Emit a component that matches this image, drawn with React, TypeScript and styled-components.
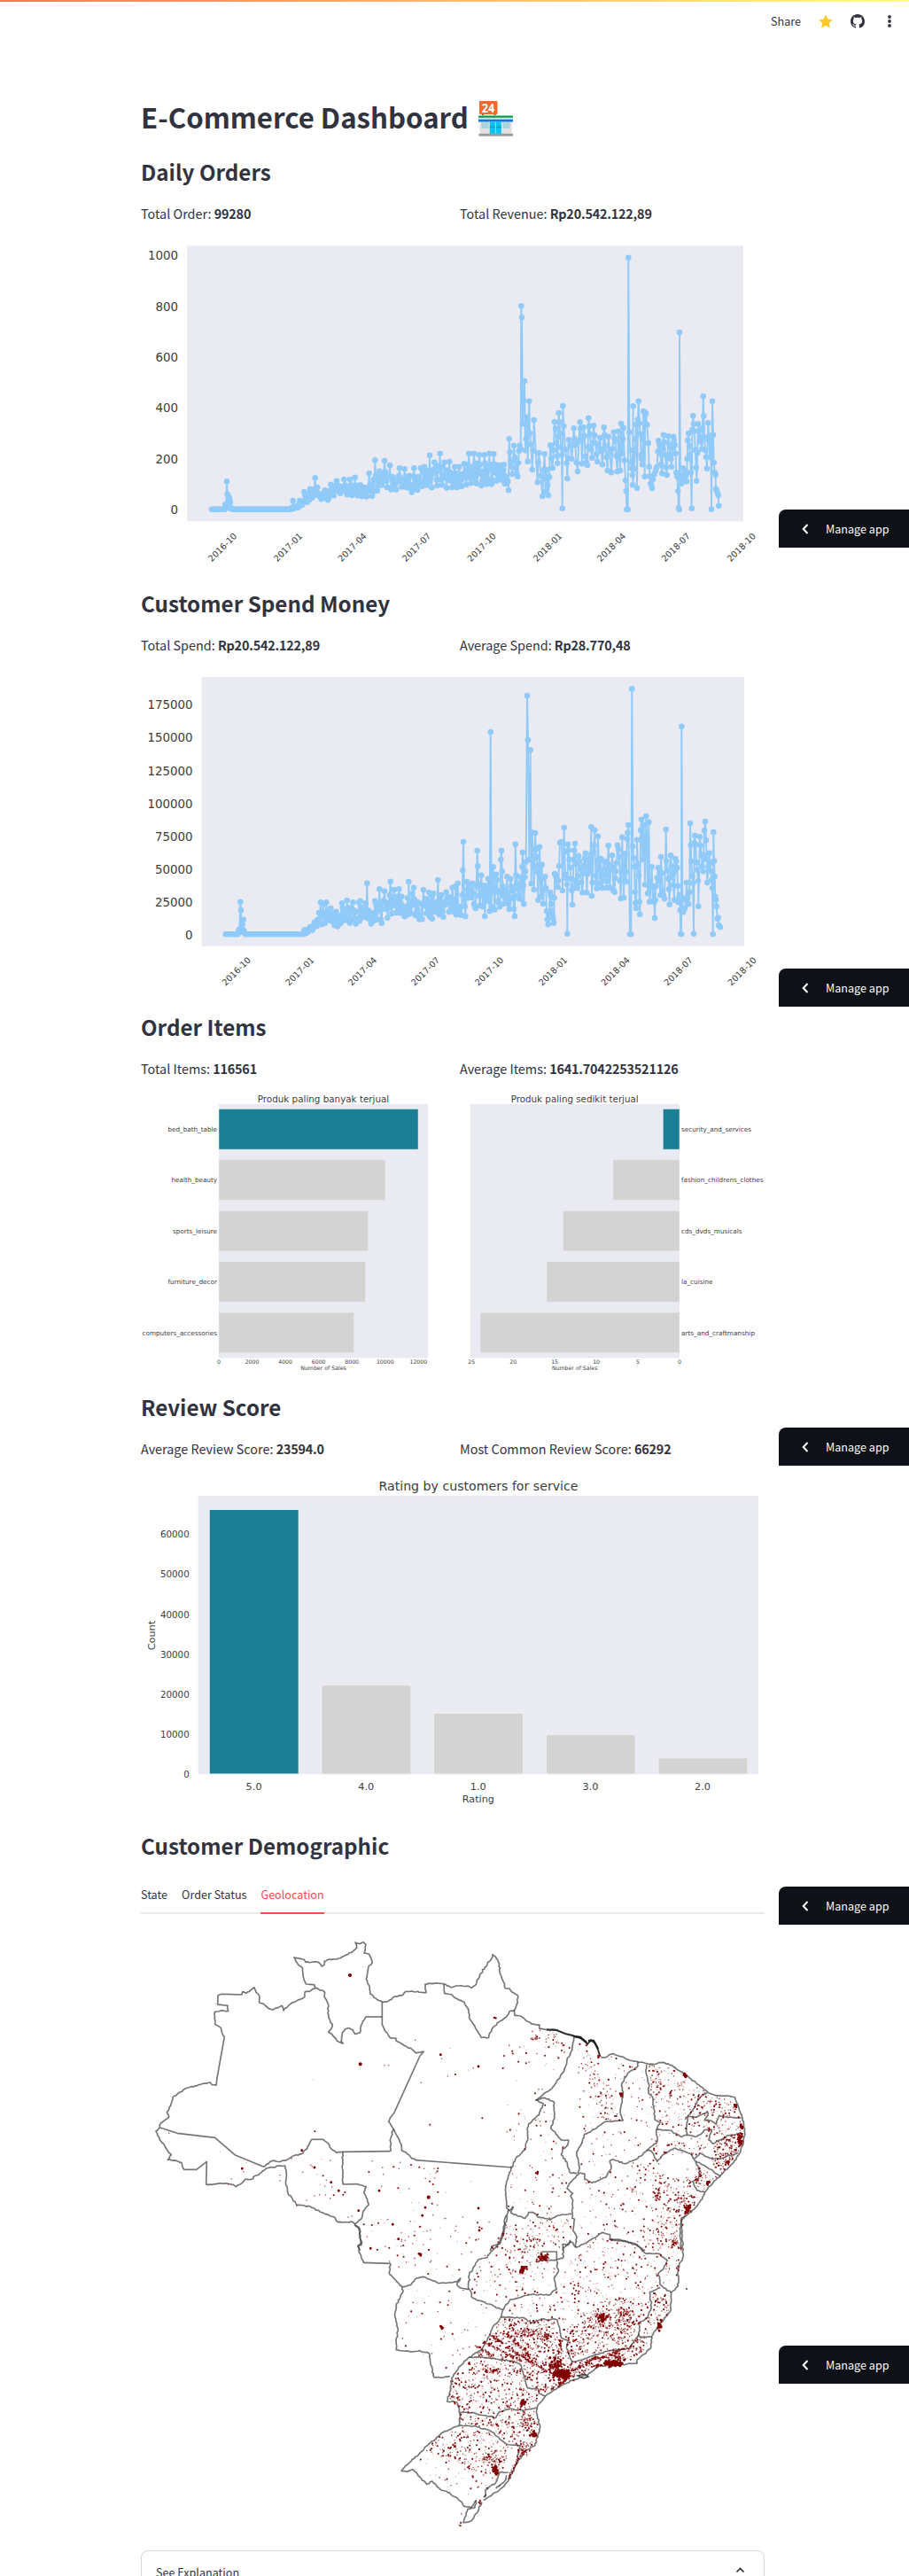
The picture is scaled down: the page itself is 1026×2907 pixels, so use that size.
import React from "react";
import styled, { createGlobalStyle } from "styled-components";

const GlobalStyle = createGlobalStyle`
  * { box-sizing: border-box; }
  body { margin: 0; background: #fff; }
`;

const SANS = `"Noto Sans CJK SC", "Source Sans Pro", sans-serif`;
const INK = "#31333f";
const PLOT = "#eaeaf2";
const LINE = "#90caf9";
const TEAL = "#1b8096";
const GREY = "#d3d3d3";

const Page = styled.div`
  position: relative;
  width: 1026px;
  height: 2907px;
  overflow: hidden;
  background: #fff;
  color: ${INK};
  font-family: ${SANS};
  font-size: 14.4px;
`;
const Decoration = styled.div`
  height: 2px;
  background: linear-gradient(90deg, #ff7459, #fffd80);
`;
const Toolbar = styled.header`
  display: flex;
  justify-content: flex-end;
  align-items: center;
  height: 44px;
  padding-right: 14px;
  gap: 20px;
`;
const Share = styled.span`
  font-size: 12.6px;
  line-height: 20px;
`;
const Main = styled.main`
  width: 704px;
  margin-left: 159px;
  padding-top: 64px;
`;
const Title = styled.h1`
  display: flex;
  align-items: center;
  gap: 11px;
  margin: 0 0 23px;
  height: 44px;
  line-height: 44px;
  font-size: 31.2px;
  font-weight: 700;
`;
const Section = styled.section<{ $height: number }>`
  display: flex;
  flex-direction: column;
  height: ${(p) => p.$height}px;
`;
const Heading = styled.h2`
  margin: 0 0 18px;
  font-size: 24.2px;
  line-height: 34px;
  font-weight: 700;
`;
const Metrics = styled.div`
  display: grid;
  grid-template-columns: 344px 344px;
  column-gap: 16px;
  line-height: 24px;
  margin-bottom: 16px;
`;
const Metric = styled.p`
  margin: 0;
  white-space: nowrap;

  strong {
    letter-spacing: -0.2px;
  }
`;
const Figure = styled.svg`
  display: block;
  flex: none;
  overflow: visible;
  font-family: "DejaVu Sans", sans-serif;
  fill: #3c3c3c;
`;
const Tabs = styled.div`
  display: flex;
  gap: 16px;
  height: 42px;
  border-bottom: 2px solid #e9eaeb;
  margin-bottom: 16px;
`;
const Tab = styled.button<{ $active?: boolean }>`
  border: 0;
  border-bottom: 2px solid ${(p) => (p.$active ? "#ff4b4b" : "transparent")};
  margin-bottom: -2px;
  padding: 0;
  background: none;
  font-family: inherit;
  font-size: 12.6px;
  line-height: 40px;
  color: ${(p) => (p.$active ? "#ff4b4b" : INK)};
`;
const Expander = styled.div`
  display: flex;
  justify-content: space-between;
  height: 60px;
  padding: 12px 17px 0 16px;
  border: 1px solid #d6d6d9;
  border-radius: 8px;
  font-size: 12.6px;
  line-height: 24px;
`;
const ManageButton = styled.button<{ $top: number }>`
  position: absolute;
  right: 0;
  top: ${(p) => p.$top}px;
  display: flex;
  align-items: center;
  width: 147px;
  height: 43px;
  padding: 0 0 0 26px;
  gap: 19px;
  border: 0;
  border-radius: 8px 0 0 0;
  background: #0e1117;
  color: #fafafa;
  font-family: inherit;
  font-size: 12.6px;
`;

type Pt = [number, number];

function makeRandom(seed: number) {
  let s = seed;
  return () => {
    s = (s * 1664525 + 1013904223) % 4294967296;
    return s / 4294967296;
  };
}

function pairs(text: string): Pt[] {
  return text.trim().split(/\s+/).map((t) => t.split(",").map(Number) as Pt);
}

/* Daily series: "x,high,low" entries describe the growth period, "x,y" entries single days. */
const ORDERS_GROWTH = `565,915,935 580,885,925 600,875,915 617,838,890 625,870,905 650,880,915 670,860,910 690,848,885 715,843,895 735,843,895 752,836,900 770,862,895 782,870,908 800,822,895 820,778,903 835,815,860 852,780,865 870,795,875 880,835,880 903,805,875 920,808,860 937,830,885 952,805,888 975,805,870 987,800,860 1005,761,865 1021,785,878 1040,755,850 1055,785,873 1072,783,870 1090,800,870 1105,800,870 1122,790,862 1138,755,860 1155,755,850 1173,760,865 1190,760,862 1207,755,855 1222,757,862 1240,795,835 1257,793,858`;
const ORDERS_LATE = `1270,850 1272,880 1274,706 1279,780 1285,825 1290,728 1297,805 1303,833 1305,787 1310,728 1313,740 1315,256 1317,295 1320,655 1326,510 1329,745 1334,632 1337,782 1342,578 1344,687 1352,810 1358,642 1370,853 1375,753 1387,900 1394,757 1397,885 1401,810 1407,897 1413,727 1421,805 1428,648 1434,720 1438,788 1442,618 1447,687 1452,760 1454,941 1456,594 1459,663 1469,788 1471,840 1476,709 1486,773 1493,670 1498,727 1506,816 1514,649 1518,700 1521,790 1526,667 1532,765 1539,795 1543,635 1548,690 1555,770 1560,661 1567,720 1573,783 1582,702 1590,793 1595,667 1600,730 1607,813 1610,698 1620,820 1628,683 1633,715 1640,817 1644,680 1650,813 1653,654 1657,755 1661,668 1668,846 1672,945 1676,945 1678,92 1681,683 1686,785 1691,828 1694,595 1693,862 1700,745 1704,657 1707,872 1710,640 1712,578 1715,653 1721,760 1725,793 1729,612 1733,833 1735,625 1737,618 1745,720 1748,800 1753,857 1758,873 1761,843 1770,815 1775,800 1780,712 1786,755 1792,823 1797,692 1803,760 1808,828 1813,697 1820,760 1824,800 1830,698 1835,727 1840,820 1843,833 1848,940 1850,945 1851,345 1854,840 1857,857 1863,805 1867,850 1871,815 1875,850 1877,773 1879,710 1882,687 1887,760 1892,941 1894,675 1897,628 1901,680 1904,743 1907,803 1909,848 1914,655 1920,700 1927,740 1931,562 1935,700 1941,767 1944,806 1948,652 1954,768 1957,695 1959,944 1962,578 1965,692 1967,787 1970,820 1973,827 1974,875 1978,885 1982,897 1984,932`;
const SPEND_GROWTH = `588,1198,1205 600,1188,1206 615,1172,1192 630,1140,1180 636,1105,1178 645,1110,1180 655,1105,1170 670,1125,1160 680,1150,1180 688,1136,1188 700,1150,1185 708,1108,1160 725,1098,1175 745,1105,1175 765,1105,1180 770,1100,1155 788,1108,1155 793,1040,1150 800,1140,1174 816,1140,1182 820,1100,1150 835,1060,1175 852,1067,1175 872,1034,1140 884,1062,1148 901,1060,1130 910,1085,1153 930,1090,1152 934,1035,1140 951,1055,1145 965,1105,1155 977,1110,1173 984,1063,1140 1003,1072,1145 1011,1080,1170 1018,1075,1140 1033,1029,1135 1044,1080,1163 1061,1070,1143 1082,1055,1130 1093,1050,1148 1100,1040,1145`;
const SPEND_LATE = `1112,1148 1115,1080 1119,900 1122,1100 1126,1153 1131,1035 1136,1090 1141,1045 1146,1088 1150,1040 1155,1110 1160,1125 1163,1050 1166,930 1170,1042 1175,1115 1180,1013 1185,1120 1189,1048 1192,1152 1196,1050 1200,1100 1203,1025 1208,1135 1211,528 1214,1120 1217,1010 1220,985 1225,1130 1230,1010 1233,1028 1237,1100 1242,1120 1246,960 1248,930 1252,1050 1256,1110 1260,1062 1264,1100 1267,1018 1273,1110 1275,1128 1279,1025 1285,1065 1290,1127 1293,1152 1295,908 1298,1013 1303,1060 1307,1092 1312,1020 1316,1095 1320,936 1324,1111 1327,1020 1331,968 1335,405 1338,555 1342,960 1346,589 1349,1042 1352,868 1358,1062 1362,870 1367,950 1372,1097 1377,917 1381,1085 1385,977 1389,1110 1396,1018 1401,1135 1406,1180 1413,1072 1417,1110 1421,1145 1425,1175 1427,1090 1428,1008 1434,1020 1439,1053 1443,982 1446,903 1452,900 1455,1065 1460,852 1464,1010 1470,1045 1471,1211 1473,908 1478,960 1483,1025 1488,1113 1492,960 1497,906 1501,1030 1505,1057 1509,947 1515,990 1522,1072 1527,980 1533,938 1537,1072 1542,960 1547,1000 1552,850 1554,1083 1559,935 1564,860 1567,1015 1571,1058 1575,881 1580,1042 1584,957 1590,1057 1596,965 1601,1015 1605,1055 1610,913 1615,1055 1623,946 1627,1065 1631,1070 1635,1000 1641,911 1647,950 1652,1092 1657,884 1662,1090 1666,940 1670,1035 1673,890 1678,843 1683,1213 1687,1213 1690,382 1693,915 1698,985 1702,1107 1704,1125 1707,893 1713,1015 1717,1145 1719,860 1722,824 1726,960 1730,842 1734,1045 1738,813 1741,888 1743,1075 1747,833 1750,1103 1757,985 1760,1100 1763,1050 1767,1158 1771,1050 1779,988 1786,1080 1788,951 1794,1065 1800,1093 1805,858 1807,965 1813,1025 1817,1112 1821,946 1827,1010 1833,1097 1837,957 1843,988 1847,1105 1851,1080 1855,1211 1857,1213 1858,509 1861,1090 1863,1138 1869,1125 1875,1038 1882,1111 1885,1070 1887,837 1891,965 1896,1040 1899,1211 1901,903 1903,879 1908,970 1914,1032 1915,1118 1920,883 1925,945 1931,1000 1935,862 1938,831 1941,895 1945,1038 1952,938 1957,1000 1962,1057 1964,1213 1966,867 1970,1017 1972,1085 1976,1118 1979,1160 1982,1157 1984,1183 1989,1189`;

function buildSeries(start: Pt[], growth: string, late: string, seed: number): Pt[] {
  const rnd = makeRandom(seed);
  const out: Pt[] = [...start];
  const g = growth.split(" ").map((t) => t.split(",").map(Number));
  g.forEach(([x, hi, lo], i) => {
    const next = g[i + 1];
    out.push([x, hi]);
    const end = next ? next[0] : x + 8;
    const n = Math.max(1, Math.round((end - x) / 2.4));
    for (let k = 1; k < n; k++) {
      const t = k / n;
      const h = next ? hi + (next[1] - hi) * t : hi;
      const l = next ? lo + (next[2] - lo) * t : lo;
      const f = k === Math.floor(n / 2) ? 1 : 0.28 + rnd() * 0.62;
      out.push([x + (end - x) * t, h + (l - h) * f]);
    }
  });
  const l = pairs(late);
  l.forEach((p, i) => {
    out.push(p);
    const q = l[i + 1];
    if (q && q[0] - p[0] > 3 && Math.abs(q[1] - p[1]) < 200) {
      const f = 0.3 + rnd() * 0.4;
      out.push([(p[0] + q[0]) / 2, p[1] + (q[1] - p[1]) * f]);
    }
  });
  return out;
}

const flat = (from: number, to: number, y: number): Pt[] => {
  const r: Pt[] = [];
  for (let x = from; x <= to; x += 2.4) r.push([x, y]);
  return r;
};

const ORDERS = buildSeries(
  [...flat(267, 311, 944.5), ...pairs("313,928 316,930 318,850 320,893 323,940 325,903 327,910 330,921 333,940"), ...flat(336, 537, 944.5), ...pairs("539,938 542,915 545,942 550,940 555,932 560,938 563,930")],
  ORDERS_GROWTH, ORDERS_LATE, 7,
);
const SPEND = buildSeries(
  [...flat(314, 355, 1213), ...pairs("358,1200 361,1196 364,1103 366,1132 368,1205 371,1180 374,1163 376,1200 379,1210"), ...flat(382, 577, 1213), ...pairs("580,1200 583,1198 586,1210")],
  SPEND_GROWTH, SPEND_LATE, 11,
);

interface LabelProps {
  x: number;
  y: number;
  size: number;
  anchor?: "start" | "middle" | "end";
  width?: number;
  rotate?: number;
  children: React.ReactNode;
}
function Label({ x, y, size, anchor = "middle", width, rotate, children }: LabelProps) {
  return (
    <text
      x={x}
      y={y}
      fontSize={size}
      textAnchor={anchor}
      textLength={width}
      lengthAdjust={width ? "spacingAndGlyphs" : undefined}
      transform={rotate ? `rotate(${rotate} ${x} ${y})` : undefined}
    >
      {children}
    </text>
  );
}

interface SeriesProps {
  top: number;
  height: number;
  originY: number;
  plot: [number, number, number, number];
  data: Pt[];
  ticks: [string, number][];
  tickX: number;
  dates: number[];
  dateY: number;
}
const DATES = ["2016-10", "2017-01", "2017-04", "2017-07", "2017-10", "2018-01", "2018-04", "2018-07", "2018-10"];
function SeriesChart({ top, height, originY, plot, data, ticks, tickX, dates, dateY }: SeriesProps) {
  const pts = data.map(([x, y]) => [150 + x / 3, originY + y / 3]);
  return (
    <Figure width={704} height={height} viewBox={`159 ${top} 704 ${height}`}>
      <rect x={plot[0]} y={plot[1]} width={plot[2]} height={plot[3]} fill={PLOT} />
      <polyline points={pts.map((p) => p.map((v) => v.toFixed(1)).join(",")).join(" ")} fill="none" stroke={LINE} strokeWidth={1.9} strokeLinejoin="round" />
      <path d={pts.map((p) => `M${p[0].toFixed(1)} ${p[1].toFixed(1)}h0`).join("")} stroke={LINE} strokeWidth={6.6} strokeLinecap="round" />
      {ticks.map(([t, y]) => <Label key={t} x={tickX} y={y + 4.9} size={13.4} anchor="end">{t}</Label>)}
      {DATES.map((d, i) => (
        <g key={d} transform={`translate(${dates[i]} ${dateY}) rotate(-45)`}>
          <Label x={0} y={3.5} size={9.8}>{d}</Label>
        </g>
      ))}
    </Figure>
  );
}

const BEST: [string, number, number][] = [["bed_bath_table", 472, 55.5], ["health_beauty", 435, 51.5], ["sports_leisure", 415.7, 50], ["furniture_decor", 412.7, 55.5], ["computers_accessories", 399.7, 84.5]];
const WORST: [string, number, number][] = [["security_and_services", 748.3, 79], ["fashion_childrens_clothes", 692, 92.5], ["cds_dvds_musicals", 635.5, 68.5], ["la_cuisine", 617, 35.5], ["arts_and_craftmanship", 542, 83]];

function ItemsChart() {
  return (
    <Figure width={704} height={321} viewBox="159 1234 704 321">
      <rect x={247} y={1246} width={236} height={286.5} fill={PLOT} />
      <rect x={530.6} y={1246} width={236.4} height={286.5} fill={PLOT} />
      <Label x={365} y={1244.3} size={10.4} width={148.5}>Produk paling banyak terjual</Label>
      <Label x={648.7} y={1244.3} size={10.4} width={144}>Produk paling sedikit terjual</Label>
      {BEST.map(([n, x, w], i) => (
        <g key={n}>
          <rect x={247} y={1251.5 + i * 57.4} width={x - 247} height={45.6} fill={i ? GREY : TEAL} stroke="#eceef3" strokeWidth={0.5} />
          <Label x={245} y={1277 + i * 57.4} size={7.3} anchor="end" width={w}>{n}</Label>
        </g>
      ))}
      {WORST.map(([n, x, w], i) => (
        <g key={n}>
          <rect x={x} y={1251.5 + i * 57.4} width={767 - x} height={45.6} fill={i ? GREY : TEAL} stroke="#eceef3" strokeWidth={0.5} />
          <Label x={769} y={1277 + i * 57.4} size={7.3} anchor="start" width={w}>{n}</Label>
        </g>
      ))}
      {[0, 2000, 4000, 6000, 8000, 10000, 12000].map((t, i) => <Label key={t} x={247 + i * 37.55} y={1539.2} size={6.2}>{t}</Label>)}
      {[25, 20, 15, 10, 5, 0].map((t, i) => <Label key={t} x={532.2 + i * 46.96} y={1539.2} size={6.2}>{t}</Label>)}
      <Label x={365} y={1546} size={6.3} width={51.5}>Number of Sales</Label>
      <Label x={648.7} y={1546} size={6.3} width={51.5}>Number of Sales</Label>
    </Figure>
  );
}

const RATINGS: [string, number][] = [["5.0", 1703.4], ["4.0", 1901.6], ["1.0", 1933.2], ["3.0", 1957.6], ["2.0", 1983.8]];
function RatingChart() {
  return (
    <Figure width={704} height={386} viewBox="159 1663 704 386">
      <rect x={223.7} y={1688.2} width={632.4} height={314} fill={PLOT} />
      <Label x={540} y={1682} size={13.2} width={225}>Rating by customers for service</Label>
      {RATINGS.map(([n, y], i) => (
        <g key={n}>
          <rect x={236.2 + i * 126.7} y={y} width={101} height={2002 - y} fill={i ? GREY : TEAL} stroke="#f1f1f6" strokeWidth={1} />
          <Label x={286.6 + i * 126.6} y={2020} size={11.3}>{n}</Label>
        </g>
      ))}
      {[0, 1, 2, 3, 4, 5, 6].map((k) => <Label key={k} x={213.7} y={2006.2 - k * 45.15} size={10.3} anchor="end">{k * 10000}</Label>)}
      <Label x={539.8} y={2034.3} size={11} width={36}>Rating</Label>
      <Label x={175} y={1845.6} size={11} width={33.5} rotate={-90}>Count</Label>
    </Figure>
  );
}

/* State and coast lines, one group for each map sheet. */
const SHEETS = [
  { tx: 150, ty: 2170, sx: 1 / 3, sy: 1 / 3, lines: [
    "90,690 95,678 108,668 122,658 115,640 128,618 135,590 160,573 185,558 215,552 240,543 262,540 268,548 282,550",
    "310,385 302,372 298,355 278,343 277,302 300,296 323,298 321,280 287,277",
    "369,243 371,233 383,238 398,228 411,218 417,235 427,245 428,270 440,273 455,285 472,294 490,288 505,280 510,297 520,287 535,273 565,259 582,250 583,233 603,229 617,221 640,228 650,235 648,250 657,265 662,285 660,305 667,328 676,350 662,370 675,378 692,400 712,408 705,400 709,372 720,359 733,356 745,363 752,376 768,372 774,345 788,318",
    "617,221 615,210 586,207 576,180 574,152 560,142 545,117 580,124 585,133 625,132 640,147 648,142 648,130 660,124 690,123 715,112 740,100 758,85 753,66 770,70 780,65 789,73 783,102 800,106 811,132 797,152 790,190 802,220 803,240 822,255 844,268",
    "844,345 853,365 870,388 890,390 892,400 920,416 945,428 957,440 985,436 972,450",
    "844,268 865,265 880,253 915,243 925,232 945,231 993,236 990,218 990,207 1020,204 1052,205",
    "886,640 866,672 882,697 873,730 872,773",
    "882,697 895,722 908,748 910,770 935,785 945,798 957,803",
    "443,826 470,806 500,808 520,803 540,790 575,780 590,765 605,733",
    "645,733 660,745 672,765 690,778 711,775",
    "90,692 78,705 90,730 110,760 130,785 118,802 150,806 165,812 172,835",
    "248,886 270,886 300,882 340,886 350,893 370,880 380,868 400,868 430,848 450,832 500,822 515,822 520,850 517,880 525,915 555,955 600,960 650,985 680,995 695,1013 745,1013 752,1020",
    "711,775 709,830 711,885", "762,884 790,893 782,910 790,930 798,955 780,975 775,1000 752,1020 765,1030 767,1055 775,1085 762,1093 770,1109",
  ], straight: ["282,550 285,525 310,385", "287,277 288,245 300,241 369,243", "788,318 844,318", "844,268 844,345", "972,450 886,640", "872,773 711,775", "957,803 1285,828", "90,692 150,712 278,727 345,785 443,826", "605,733 645,733", "172,835 215,835 250,808 248,886", "711,885 762,884"] },
  { tx: 500, ty: 2170, sx: 1 / 3, sy: 1 / 3, lines: [
    "2,207 30,218 50,213 80,214 97,220 112,208 125,175 150,140 165,120 168,107 185,125 191,140 192,165 205,200 212,222 225,222 235,235 253,245 253,270 243,293 243,313 262,315 285,333 300,342 327,345 327,358 350,361 390,362",
    "2,207 5,238 28,242 50,258 72,268 87,297 90,325 105,345 122,375 130,388 155,388 165,360 190,335 215,318 225,300 243,295",
    "535,455 552,455 572,443 600,452 625,462 650,468 685,475 710,478 745,472 775,482 800,500 830,520 860,545 895,572 920,583 970,586 988,590 1000,620 1012,655 1018,680 1022,710 1018,745 1002,785 975,820 940,855 915,878 890,908 870,945 850,970 825,990 808,998 803,1040 806,1109",
    "444,388 438,430 420,465 410,500 370,560 314,600 340,612 325,650 290,680 285,700 288,730 275,770 245,800 225,845 212,890 215,965 225,975 238,960",
    "314,600 345,592 375,605 378,660 365,695 400,735 425,735 422,752 405,765 400,785 420,810 430,845 455,847",
    "660,470 660,485 625,510 605,545 610,580 600,640 610,668 550,673 515,698 480,715 468,750 452,775 462,825 458,848",
    "463,845 480,850 480,868 505,880 550,862 570,830 565,805 575,800 615,815 660,797 690,770 725,742 723,700 735,675 718,667 710,590 695,575 697,545 688,510 690,480",
    "723,700 770,702 808,725 825,718 825,680 828,655 845,635 860,605 880,580 895,575",
    "828,655 860,657 895,638 897,652 885,668 910,670 925,682 935,652 965,658 1010,660",
    "825,718 860,723 890,700 910,700 900,735 915,748 960,722 1010,710",
    "690,770 705,772 725,808 745,785 785,762 835,780 850,800 870,780 915,800 950,795 1000,778",
    "850,803 890,825 940,857", "855,808 870,840 865,865 845,875 860,905 887,912",
    "463,847 430,880 420,900 440,915 432,925 440,940 437,1000 446,1003 440,1040 452,1060 450,1098 490,1080 540,1048 565,1055 565,1070 580,1075 620,1078 660,1095 685,1109",
    "238,960 230,982 278,1000 290,980 305,980 320,995 340,998 365,1005 390,990 435,985",
    "225,970 210,1000 205,1040 190,1085 165,1095 160,1109", "450,1098 430,1075 425,1090 405,1088 405,1109",
  ], straight: [] as string[] },
  { tx: 400, ty: 2500, sx: 0.3992, sy: 1 / 3, lines: [
    "0,32 15,45 20,100 10,105 25,160", "102,163 98,195 120,225 135,242 160,235 175,213 195,208 240,230 265,228 290,225 300,213 290,235 298,245 325,250 335,280 380,300 420,320 412,350",
    "135,242 137,260 118,305 115,345 122,380 118,455 160,462 185,458 212,468 215,500 225,548 245,550 270,545",
    "412,350 390,380 375,425 360,455 325,480 295,515 275,550 272,590 262,630 290,633 298,670 297,712",
    "432,0 425,40 415,85 412,95 385,125 375,143 350,150 325,200 323,250",
    "325,480 380,482 450,495 470,505 480,545 490,585 520,588 522,603 540,612",
    "420,320 440,285 500,268 550,270 572,250 565,210 577,190 572,155",
    "572,150 590,145 590,110 612,88", "720,82 750,82 800,100 825,130 860,130 885,152 875,180 860,195 865,235 895,262",
    "935,0 925,20 930,140 915,180 915,240 895,262 895,320 860,375 840,410 838,450 800,488 800,500 740,508 690,510 660,540 610,560 560,595 540,612 520,640 515,670 525,720 510,780 480,800 455,850 435,900 410,930 365,965",
    "865,245 835,260 840,310 830,345 805,365 805,410 840,412", "805,400 785,435 780,450 720,458 640,490 615,495 600,450 605,425 585,415 580,380 575,355 565,350 545,355 530,350 500,365 480,347 415,345",
    "298,668 330,668 400,685 410,665 440,655 480,660 515,650", "297,712 345,715 385,730 430,775 468,780 460,820",
    "297,712 250,735 210,775 185,805 140,855 133,865 150,868 165,860 205,910 220,900 245,930 270,940 300,968 310,985 330,988 345,965",
    "435,870 410,870 400,905 370,930 370,955", "345,965 340,990 320,995 308,1040 330,1035 350,1000 360,970", "430,880 425,900 400,925",
  ], straight: ["25,160 102,163", "530,123 572,123 572,152 530,152 530,123"] },
];

const rough = makeRandom(31);
function roughen(points: Pt[]): string {
  const out: Pt[] = [];
  points.forEach((p, i) => {
    out.push(p);
    const q = points[i + 1];
    if (!q) return;
    const d = Math.hypot(q[0] - p[0], q[1] - p[1]);
    const n = Math.floor(d / 6);
    for (let k = 1; k < n; k++) {
      out.push([p[0] + ((q[0] - p[0]) * k) / n + (rough() - 0.5) * 4, p[1] + ((q[1] - p[1]) * k) / n + (rough() - 0.5) * 4]);
    }
  });
  return out.map((p) => p.map((v) => v.toFixed(1)).join(",")).join(" ");
}
const OUTLINES = SHEETS.map((s) => ({ ...s, drawn: s.lines.map((l) => roughen(pairs(l))) }));

/* Customer locations. Towns are "x,y,radius"; clouds are polygons or gaussians filled with small dots. */
const north = (t: string) => t.split(" ").map((s) => { const [x, y, r] = s.split(",").map(Number); return [150 + x / 3, 2170 + y / 3, r]; });
const TOWNS = north("735,177,1.9 770,478,2.4 370,832,1.5 572,770,1.7 780,148,.6 280,275,.6 610,531,.6 852,482,.7 866,482,.7 956,397,.8 1042,446,1.4 1046,460,.7 1075,424,.6 1170,486,1.3 1153,491,.9 1092,513,1.1 1066,519,.8 1136,498,.6 976,541,.9 1183,661,1.2 1006,683,1 616,706,1 122,712,.8 296,774,.6 384,812,.6 375,842,.7 334,867,.8 323,885,.7 498,854,.8 498,873,.8 538,797,.8 639,800,.6 668,804,.9 602,820,.9 607,825,.9 615,828,1.3 575,844,.8 623,851,.6 644,856,1.1 655,871,.9 671,878,1.6 634,886,.6 650,891,.9 674,894,.8 697,907,1.3 718,912,1.1 712,920,1.1 680,922,1.2 668,932,.9 632,920,.8 615,924,.8 588,939,.8 554,958,.8 652,921,.7 764,974,1.3 742,993,.9 729,996,.7 811,806,.9 799,843,1.1 845,828,.9 848,851,.9 883,826,1.1 901,832,.9 905,811,.7 942,819,1 970,827,1.2 986,832,.8 1020,832,.7 1033,831,1.1 1031,841,1.2 1027,846,.9 1007,850,.6 991,865,.9 1005,875,1.2 1022,864,.9 1016,885,1.1 842,892,.9 834,907,1.4 898,898,1.1 904,912,.6 935,900,.8 1033,911,1 1060,912,.6 1001,929,1.8 943,947,.6 968,947,.6 1013,950,1 1031,955,.7 990,964,1.4 950,973,.6 980,991,1.3 1016,989,.7 1117,996,.8 1170,966,1.3 782,1021,1.2 809,1023,1.1 831,1016,1.2 880,1021,1.3 940,1010,.8 973,1028,1 1167,1015,1.2 1173,1041,1.3 1162,1073,1.2 953,1058,1 934,1062,.9 899,1070,1.3 922,1075,.9 910,1078,.8 960,1076,.6 793,1063,.8 855,1095,.9 868,1100,1.1 916,1092,1 805,1102,1.3 828,1106,1.2 1076,1061,.9 1099,1079,.6 1129,1084,1 1139,1066,.9 1144,875,.6");

type Cloud = { sheet: number; poly: string; n: number; big: number };
const CLOUDS: Cloud[] = [
  { sheet: 1, poly: "200,400 420,390 400,500 310,600 290,680 220,790 200,540", n: 46, big: 0.4 },
  { sheet: 1, poly: "290,350 430,385 430,430 330,420 290,400", n: 26, big: 0.3 },
  { sheet: 1, poly: "330,610 370,620 370,700 420,760 400,790 430,845 420,900 430,980 360,1000 290,980 220,960 220,860 290,740", n: 70, big: 0.35 },
  { sheet: 1, poly: "450,400 490,410 600,670 540,670 480,520", n: 85, big: 0.3 },
  { sheet: 1, poly: "520,420 655,475 605,540 600,660 470,710 440,500", n: 60, big: 0.4 },
  { sheet: 1, poly: "610,500 690,480 705,590 720,740 580,800 460,840 470,740 600,680", n: 62, big: 0.3 },
  { sheet: 1, poly: "695,480 780,485 890,575 830,640 820,715 735,695 710,580", n: 150, big: 0.3 },
  { sheet: 1, poly: "695,500 740,490 730,590 705,580", n: 45, big: 0.2 },
  { sheet: 1, poly: "880,580 985,592 1015,700 960,720 835,710 830,650", n: 170, big: 0.3 },
  { sheet: 1, poly: "920,740 1010,700 1015,740 995,785 940,855 910,810", n: 190, big: 0.35 },
  { sheet: 1, poly: "730,705 900,720 900,790 850,790 720,800 700,770", n: 60, big: 0.3 },
  { sheet: 1, poly: "855,820 930,860 880,910 850,880", n: 60, big: 0.3 },
  { sheet: 1, poly: "470,870 600,820 700,800 850,840 870,920 800,1000 800,1109 660,1095 450,1080", n: 190, big: 0.35 },
  { sheet: 1, poly: "720,850 870,860 850,960 810,1000 800,1100 740,1090 700,960", n: 150, big: 0.35 },
  { sheet: 1, poly: "225,990 430,995 440,1070 400,1100 180,1100", n: 55, big: 0.4 },
  { sheet: 2, poly: "25,0 420,0 400,90 320,190 320,240 150,230 100,160 30,100", n: 50, big: 0.35 },
  { sheet: 2, poly: "430,20 610,20 610,80 570,130 570,250 430,285 410,310 330,260 330,200", n: 170, big: 0.35 },
  { sheet: 2, poly: "430,60 530,70 520,200 430,200", n: 65, big: 0.3 },
  { sheet: 2, poly: "140,240 310,250 410,325 370,420 260,540 215,500 130,440", n: 45, big: 0.3 },
  { sheet: 2, poly: "625,110 700,70 870,140 860,230 830,340 780,440 620,490 580,350 430,335 450,290 570,260", n: 420, big: 0.35 },
  { sheet: 2, poly: "660,340 740,270 825,300 800,390 760,450 620,480 590,420", n: 230, big: 0.35 },
  { sheet: 2, poly: "840,10 930,30 915,240 870,230 885,150 800,95", n: 85, big: 0.35 },
  { sheet: 2, poly: "840,260 890,270 890,330 840,400 810,400 840,330", n: 80, big: 0.4 },
  { sheet: 2, poly: "800,410 835,415 830,450 780,490 690,500 620,560 560,570 640,495 780,455", n: 150, big: 0.4 },
  { sheet: 2, poly: "415,350 565,355 600,490 650,500 610,550 540,605 490,580 470,505 340,480 380,420", n: 640, big: 0.35 },
  { sheet: 2, poly: "330,485 470,505 480,570 530,600 510,650 400,680 300,665 270,620 275,560", n: 400, big: 0.3 },
  { sheet: 2, poly: "300,670 400,685 515,655 520,720 510,780 460,790 380,720 300,710", n: 190, big: 0.35 },
  { sheet: 2, poly: "220,760 300,715 380,735 450,790 400,900 360,880 200,800", n: 250, big: 0.3 },
  { sheet: 2, poly: "150,860 220,770 400,880 420,910 340,960 200,900", n: 45, big: 0.45 },
];
/* sheet, x, y, spreadX, spreadY, count, dot radius */
const BURSTS: number[][] = [
  [1, 313, 392, 9, 4, 22, 0.9], [1, 528, 452, 4, 3, 8, 1.2], [1, 604, 581, 2, 2, 8, 1.6], [1, 820, 516, 3, 3, 12, 1.6], [1, 990, 620, 2, 3, 10, 1.5], [1, 1010, 687, 3, 4, 12, 1.3],
  [1, 1006, 732, 4, 9, 32, 1.4], [1, 964, 812, 4, 4, 10, 1.2], [1, 897, 881, 3, 3, 8, 1.3], [1, 826, 972, 7, 9, 26, 1.3], [1, 805, 545, 10, 8, 22, 0.6], [1, 176, 321, 3, 2, 6, 1.1], [1, 319, 846, 2, 3, 5, 1.2], [1, 645, 905, 8, 7, 18, 0.7], [1, 782, 1078, 8, 8, 20, 0.9],
  [2, 535, 143, 8, 8, 40, 1.2], [2, 476, 184, 5, 6, 26, 1.4], [2, 185, 131, 2, 2, 6, 1.6], [2, 248, 380, 3, 3, 8, 1.3], [2, 700, 348, 7, 8, 42, 1.4], [2, 770, 328, 11, 7, 38, 0.9], [2, 862, 368, 5, 10, 26, 1.3],
  [2, 732, 500, 14, 6, 105, 1.5], [2, 740, 472, 9, 14, 35, 1.1], [2, 585, 538, 13, 8, 125, 1.6], [2, 568, 505, 12, 16, 80, 1.2], [2, 540, 410, 9, 8, 28, 1], [2, 490, 400, 25, 8, 70, 0.8], [2, 388, 527, 14, 5, 32, 1],
  [2, 478, 634, 4, 6, 26, 1.3], [2, 490, 700, 12, 15, 55, 0.9], [2, 506, 742, 4, 5, 20, 1.3], [2, 475, 795, 9, 13, 48, 1], [2, 398, 862, 4, 8, 40, 1.4], [2, 385, 825, 15, 16, 70, 0.9], [2, 355, 970, 3, 5, 6, 1.1], [2, 685, 508, 9, 4, 25, 1],
  [2, 610, 465, 25, 10, 40, 0.9], [2, 720, 370, 45, 35, 170, 0.85],
];
/* Corridors of towns that follow the highways: sheet, x1, y1, x2, y2, count */
const ROADS: number[][] = [
  [2, 380, 400, 540, 530, 90], [2, 365, 428, 480, 500, 60], [2, 620, 525, 690, 475, 65], [2, 585, 420, 570, 510, 30], [2, 690, 485, 790, 440, 40], [2, 430, 400, 470, 450, 35], [2, 480, 450, 500, 500, 25], [2, 430, 900, 470, 810, 30], [2, 300, 1050, 302, 995, 4], [2, 600, 555, 560, 590, 20], [2, 340, 440, 400, 480, 25], [1, 740, 850, 720, 950, 28],
];

function inside(x: number, y: number, poly: Pt[]) {
  let hit = false;
  for (let i = 0, j = poly.length - 1; i < poly.length; j = i++) {
    const [xi, yi] = poly[i];
    const [xj, yj] = poly[j];
    if (yi > y !== yj > y && x < ((xj - xi) * (y - yi)) / (yj - yi) + xi) hit = !hit;
  }
  return hit;
}

const LAYERS: { w: number; o: number; d: string[] }[] = [
  { w: 1.2, o: 0.42, d: [] }, { w: 1.6, o: 0.7, d: [] }, { w: 2.1, o: 0.95, d: [] }, { w: 2.9, o: 1, d: [] }, { w: 4.2, o: 1, d: [] },
];
function addDot(x: number, y: number, r: number) {
  const k = r < 0.7 ? 0 : r < 0.95 ? 1 : r < 1.25 ? 2 : r < 1.75 ? 3 : 4;
  LAYERS[k].d.push(`M${x.toFixed(1)} ${y.toFixed(1)}h0`);
}
(function plotCustomers() {
  const rnd = makeRandom(97);
  const gauss = () => (rnd() + rnd() + rnd() + rnd() - 2) * 1.5;
  const put = (s: number, x: number, y: number, r: number) => {
    const m = SHEETS[s];
    addDot(m.tx + x * m.sx, m.ty + y * m.sy, r);
  };
  TOWNS.forEach(([x, y, r]) => addDot(x, y, r));
  CLOUDS.forEach((c) => {
    const poly = pairs(c.poly);
    const xs = poly.map((p) => p[0]);
    const ys = poly.map((p) => p[1]);
    const x0 = Math.min(...xs), y0 = Math.min(...ys), w = Math.max(...xs) - x0, h = Math.max(...ys) - y0;
    let left = c.n;
    while (left > 0) {
      const x = x0 + rnd() * w, y = y0 + rnd() * h;
      if (!inside(x, y, poly)) continue;
      const dark = rnd() < c.big;
      put(c.sheet, x, y, dark ? 0.85 + rnd() * 0.35 : 0.5 + rnd() * 0.35);
      left--;
    }
  });
  BURSTS.forEach(([s, x, y, sx, sy, n, r]) => {
    for (let i = 0; i < n; i++) put(s, x + gauss() * sx, y + gauss() * sy, r * (0.7 + rnd() * 0.4));
  });
  ROADS.forEach(([s, x1, y1, x2, y2, n]) => {
    for (let i = 0; i < n; i++) {
      const t = rnd();
      put(s, x1 + (x2 - x1) * t + gauss() * 3, y1 + (y2 - y1) * t + gauss() * 3, 0.7 + rnd() * 0.4);
    }
  });
})();

const rim = { fill: "none", stroke: "#3a3a3a", strokeOpacity: 0.7, strokeWidth: 1.65, strokeLinejoin: "round" as const, vectorEffect: "non-scaling-stroke" as const };
function BrazilMap() {
  return (
    <Figure width={704} height={702} viewBox="159 2176 704 702">
      {OUTLINES.map((s, i) => (
        <g key={i} transform={`translate(${s.tx} ${s.ty}) scale(${s.sx} ${s.sy})`}>
          {s.drawn.map((p, k) => <polyline key={k} points={p} {...rim} />)}
          {s.straight.map((p, k) => <polyline key={k} points={p} {...rim} />)}
        </g>
      ))}
      <path d="M617 2290.500L628 2291L638 2295L646 2297L655 2300L661 2304L663 2307L667 2302L672 2306L675 2313L677 2320" fill="none" stroke="#2c2f2f" strokeWidth={1.9} />
      <path d="M647 2298l8 1l7 6M664 2303l6 0l5 9" fill="none" stroke="#222" strokeWidth={2.4} />
      <path d="M652 2681l8 -2l4 3l-5 2zM546 2818l3 -3M775 2582v2" fill="none" stroke="#444" strokeWidth={1.6} />
      {LAYERS.map((l) => (
        <path key={l.w} d={l.d.join("")} fill="none" stroke="#800000" strokeOpacity={l.o} strokeWidth={l.w} strokeLinecap="round" />
      ))}
    </Figure>
  );
}

const Store = styled.svg`
  flex: none;
  margin-top: 4px;
  overflow: visible;
`;
function StoreIcon() {
  return (
    <Store width="39" height="40" viewBox="0 0 39 40">
      <path d="M5 14v4M18.500 14v4" stroke="#7a5a3c" strokeWidth="2" />
      <rect x="1" y="0" width="20.500" height="15" rx="1" fill="#f16a2d" />
      <text x="11" y="12.600" fontSize="14" fontWeight="700" textAnchor="middle" textLength="14.500" lengthAdjust="spacingAndGlyphs" fill="#fff" fontFamily="Open Sans, sans-serif">24</text>
      <rect x="1.500" y="22" width="36" height="15.500" fill="#e1e1e3" />
      <path d="M0.500 16h38v2.200h-38z" fill="#6fd39b" />
      <path d="M0 18h39v3.400h-39z" fill="#d8e3ea" />
      <path d="M0 17h39v1.800h-39z" fill="#129a4c" />
      <path d="M0 20.800h39v2.800h-39z" fill="#0a7be0" />
      <rect x="3.500" y="24.500" width="8" height="6.500" fill="#a9d2dc" />
      <rect x="27.500" y="24.500" width="8" height="6.500" fill="#a9d2dc" />
      <rect x="12.800" y="23.500" width="13" height="14" fill="#04c3f5" />
      <path d="M12.800 29.500h13" stroke="#13a3a0" strokeWidth="1.500" />
      <path d="M19.300 23.500v14" stroke="#8fe3fb" strokeWidth="1" />
      <rect x="0.500" y="36.800" width="38.500" height="2.900" fill="#9c9c9e" />
    </Store>
  );
}

function Chevron({ up, color }: { up?: boolean; color: string }) {
  return (
    <svg width={up ? 11 : 8} height={up ? 8 : 12} viewBox={up ? "0 0 11 8" : "0 0 8 12"} fill="none" stroke={color} strokeWidth={up ? 1.7 : 2}>
      <path d={up ? "M1.500 6.500L5.500 2.500L9.500 6.500" : "M6.500 1L1.700 6L6.500 11"} />
    </svg>
  );
}
const ChevronSlot = styled.span`
  display: flex;
  align-items: flex-start;
  padding-top: 5px;
  margin-right: 4px;
`;

interface ReportProps {
  title: string;
  left: [string, string];
  right: [string, string];
  height: number;
  children: React.ReactNode;
}
function Report({ title, left, right, height, children }: ReportProps) {
  return (
    <Section $height={height}>
      <Heading>{title}</Heading>
      <Metrics>
        <Metric>{left[0]}: <strong>{left[1]}</strong></Metric>
        <Metric>{right[0]}: <strong>{right[1]}</strong></Metric>
      </Metrics>
      {children}
    </Section>
  );
}

export default function App() {
  return (
    <Page>
      <GlobalStyle />
      <Decoration />
      <Toolbar>
        <Share>Share</Share>
        <svg width="16" height="16" viewBox="0 0 24 24" fill="#fcc929"><path d="M12 .6l3.500 7.700 8.400 1-6.200 5.700 1.600 8.300L12 19.200l-7.300 4.100 1.600-8.300L.1 9.300l8.400-1z" /></svg>
        <svg width="16" height="16" viewBox="0 0 16 16" fill={INK}><path d="M8 0C3.580 0 0 3.580 0 8c0 3.540 2.290 6.530 5.470 7.590.4.070.55-.17.55-.38 0-.19-.01-.82-.01-1.490-2.010.37-2.530-.49-2.690-.94-.09-.23-.48-.94-.82-1.130-.28-.15-.68-.52-.01-.53.63-.01 1.080.58 1.230.82.72 1.210 1.870.87 2.330.66.07-.52.28-.87.51-1.070-1.780-.2-3.640-.89-3.640-3.950 0-.87.31-1.590.82-2.150-.08-.2-.36-1.020.08-2.120 0 0 .67-.21 2.200.82.64-.18 1.320-.27 2-.27s1.360.09 2 .27c1.530-1.040 2.200-.82 2.200-.82.44 1.100.16 1.920.08 2.120.51.56.82 1.270.82 2.150 0 3.070-1.870 3.750-3.650 3.950.29.25.54.73.54 1.480 0 1.070-.01 1.930-.01 2.200 0 .21.15.46.55.38A8.010 8.010 0 0 0 16 8c0-4.420-3.580-8-8-8z" /></svg>
        <svg width="16" height="16" viewBox="0 0 16 16" fill={INK}><circle cx="8" cy="3" r="1.900" /><circle cx="8" cy="8" r="1.900" /><circle cx="8" cy="13" r="1.900" /></svg>
      </Toolbar>
      <Main>
        <Title><span>E-Commerce Dashboard</span><StoreIcon /></Title>
        <Report title="Daily Orders" left={["Total Order", "99280"]} right={["Total Revenue", "Rp20.542.122,89"]} height={487}>
          <SeriesChart top={269} height={379} originY={260} plot={[211.3, 277.3, 627.7, 311]} data={ORDERS} tickX={201}
            ticks={[0, 200, 400, 600, 800, 1000].map((v) => [String(v), 575.3 - v * 0.2869])}
            dates={[251, 325, 397.5, 470, 543.5, 618, 690, 762.7, 836.7]} dateY={617.5} />
        </Report>
        <Report title="Customer Spend Money" left={["Total Spend", "Rp20.542.122,89"]} right={["Average Spend", "Rp28.770,48"]} height={478}>
          <SeriesChart top={756} height={370} originY={650} plot={[227.5, 764, 612.5, 303.7]} data={SPEND} tickX={217.5}
            ticks={[0, 1, 2, 3, 4, 5, 6, 7].map((v) => [String(v * 25000), 1055.1 - v * 37.1])}
            dates={[266.7, 338.3, 409, 480, 552, 624, 694.5, 765.5, 837.5]} dateY={1096} />
        </Report>
        <Report title="Order Items" left={["Total Items", "116561"]} right={["Average Items", "1641.7042253521126"]} height={429}>
          <ItemsChart />
        </Report>
        <Report title="Review Score" left={["Average Review Score", "23594.0"]} right={["Most Common Review Score", "66292"]} height={495}>
          <RatingChart />
        </Report>
        <Heading>Customer Demographic</Heading>
        <Tabs>
          <Tab>State</Tab>
          <Tab>Order Status</Tab>
          <Tab $active>Geolocation</Tab>
        </Tabs>
        <BrazilMap />
        <Expander>
          <span>See Explanation</span>
          <ChevronSlot><Chevron up color={INK} /></ChevronSlot>
        </Expander>
      </Main>
      {[575, 1093, 1611, 2129, 2647].map((top) => (
        <ManageButton key={top} $top={top}><Chevron color="#fff" /><span>Manage app</span></ManageButton>
      ))}
    </Page>
  );
}
